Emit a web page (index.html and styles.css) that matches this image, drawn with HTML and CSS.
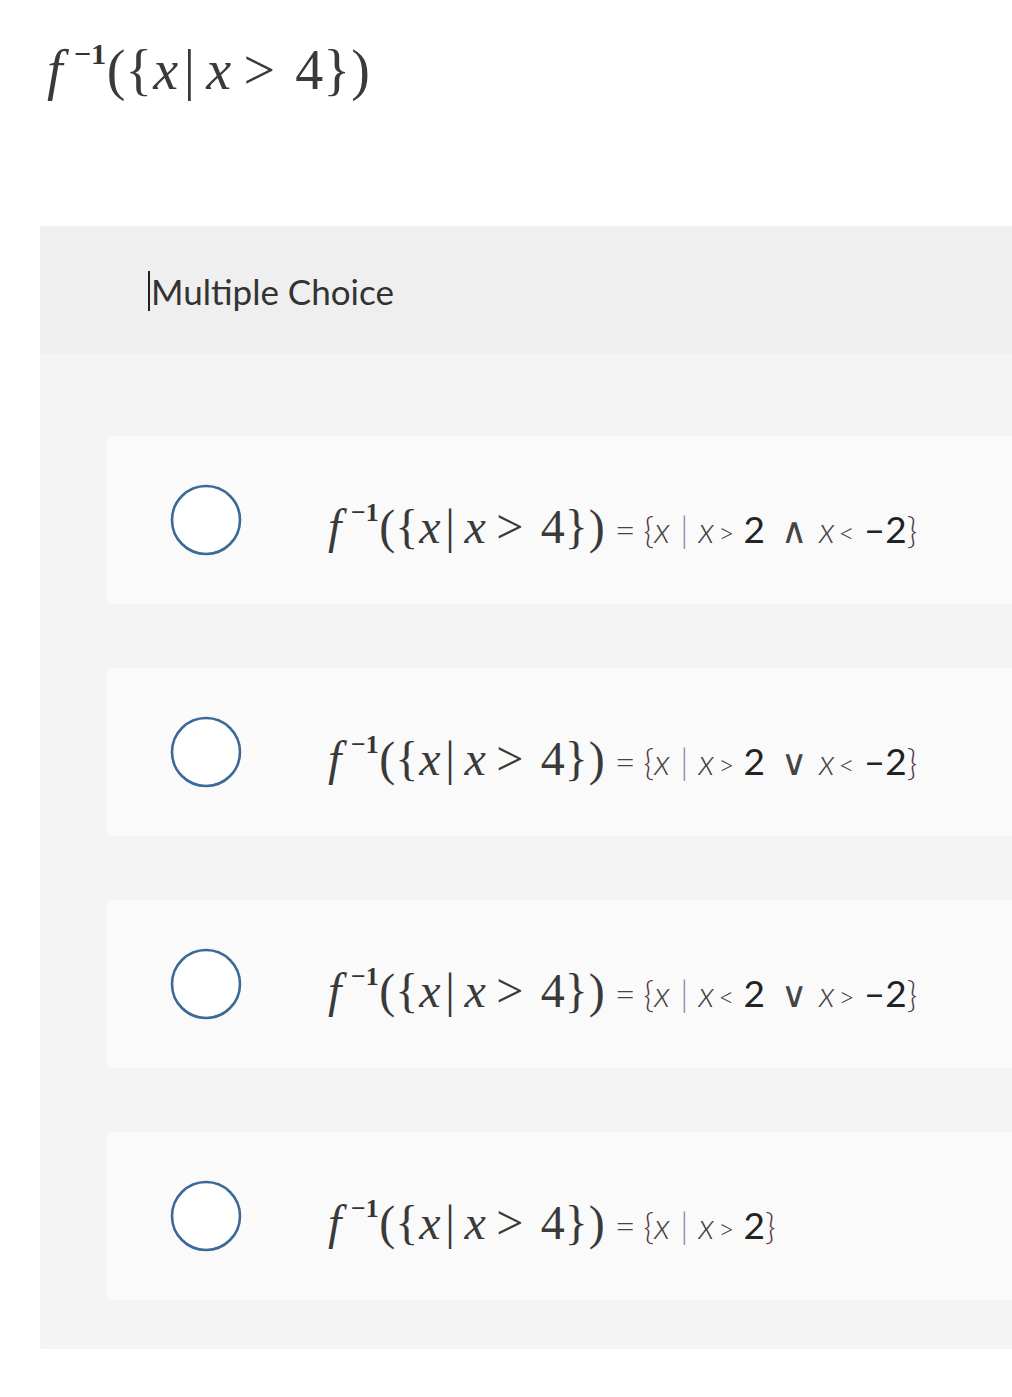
FILE: index.html
```html
<!DOCTYPE html>
<html lang="en">
<head>
<meta charset="utf-8">
<title>Multiple Choice</title>
<link rel="stylesheet" href="styles.css">
</head>
<body>
<div class="question">
  <span class="math title-math"><i class="f">f</i><sup>−1</sup><span class="p">(</span><span class="b">{</span><i>x</i><span class="mid">|</span><i>x</i><span class="rel">&gt;</span><span class="four">4</span><span class="b">}</span><span class="p">)</span></span>
</div>
<section class="panel">
  <header class="panel-head"><span class="cursor"></span>Multiple Choice</header>
  <div class="panel-body">
    <div class="option">
      <svg class="radio" width="72" height="72" viewBox="0 0 72 72"><circle cx="36" cy="36" r="34" fill="#fff" stroke="#3c6a96" stroke-width="2.6"/></svg>
      <div class="answer"><span class="math"><i class="f">f</i><sup>−1</sup><span class="p">(</span><span class="b">{</span><i>x</i><span class="mid">|</span><i>x</i><span class="rel">&gt;</span><span class="four">4</span><span class="b">}</span><span class="p">)</span></span><span class="eq"><span class="eqs">=</span><span class="br">{</span><i>x</i><span class="bar">|</span><i>x</i><span class="op">&gt;</span><span class="num">2</span><span class="logic">∧</span><i>x</i><span class="op">&lt;</span><span class="num">–2</span><span class="br">}</span></span></div>
    </div>
    <div class="option">
      <svg class="radio" width="72" height="72" viewBox="0 0 72 72"><circle cx="36" cy="36" r="34" fill="#fff" stroke="#3c6a96" stroke-width="2.6"/></svg>
      <div class="answer"><span class="math"><i class="f">f</i><sup>−1</sup><span class="p">(</span><span class="b">{</span><i>x</i><span class="mid">|</span><i>x</i><span class="rel">&gt;</span><span class="four">4</span><span class="b">}</span><span class="p">)</span></span><span class="eq"><span class="eqs">=</span><span class="br">{</span><i>x</i><span class="bar">|</span><i>x</i><span class="op">&gt;</span><span class="num">2</span><span class="logic">∨</span><i>x</i><span class="op">&lt;</span><span class="num">–2</span><span class="br">}</span></span></div>
    </div>
    <div class="option">
      <svg class="radio" width="72" height="72" viewBox="0 0 72 72"><circle cx="36" cy="36" r="34" fill="#fff" stroke="#3c6a96" stroke-width="2.6"/></svg>
      <div class="answer"><span class="math"><i class="f">f</i><sup>−1</sup><span class="p">(</span><span class="b">{</span><i>x</i><span class="mid">|</span><i>x</i><span class="rel">&gt;</span><span class="four">4</span><span class="b">}</span><span class="p">)</span></span><span class="eq"><span class="eqs">=</span><span class="br">{</span><i>x</i><span class="bar">|</span><i>x</i><span class="op">&lt;</span><span class="num">2</span><span class="logic">∨</span><i>x</i><span class="op">&gt;</span><span class="num">–2</span><span class="br">}</span></span></div>
    </div>
    <div class="option">
      <svg class="radio" width="72" height="72" viewBox="0 0 72 72"><circle cx="36" cy="36" r="34" fill="#fff" stroke="#3c6a96" stroke-width="2.6"/></svg>
      <div class="answer"><span class="math"><i class="f">f</i><sup>−1</sup><span class="p">(</span><span class="b">{</span><i>x</i><span class="mid">|</span><i>x</i><span class="rel">&gt;</span><span class="four">4</span><span class="b">}</span><span class="p">)</span></span><span class="eq"><span class="eqs">=</span><span class="br">{</span><i>x</i><span class="bar">|</span><i>x</i><span class="op">&gt;</span><span class="num">2</span><span class="br">}</span></span></div>
    </div>
  </div>
</section>
</body>
</html>
```

FILE: styles.css
```css
html, body {
  margin: 0;
  padding: 0;
  background: #fff;
  overflow: hidden;
}
body {
  width: 1012px;
  height: 1397px;
  font-family: "Lato", "Open Sans", sans-serif;
  color: #333;
}
.question {
  padding: 42px 0 0 47px;
  height: 226px;
  box-sizing: border-box;
  line-height: 1;
}
.math {
  font-family: "Liberation Serif", "DejaVu Serif", serif;
  color: #3a3a3a;
  white-space: nowrap;
  display: inline-flex;
  align-items: baseline;
}
.math i {
  font-style: italic;
}
.math .f {
  margin-right: 0.2em;
}
.math sup {
  font-size: 0.54em;
  line-height: 1;
  position: relative;
  top: -0.82em;
  vertical-align: baseline;
  font-weight: bold;
  margin-right: 0.02em;
  color: #333;
}
.math .b {
  margin-right: 0.02em;
}
.math .mid {
  margin: 0 0.2em 0 0.1em;
}
.math .rel {
  margin: 0 0.36em 0 0.22em;
}
.title-math {
  font-size: 56px;
}
.panel {
  margin-left: 40px;
  background: #f4f4f4;
  border-radius: 3px 0 0 3px;
}
.panel-head {
  height: 127px;
  background: #efefef;
  display: flex;
  align-items: center;
  padding: 2px 0 0 108px;
  font-family: "Lato", "Open Sans", sans-serif;
  font-size: 35px;
  color: #333;
  box-sizing: border-box;
  border-radius: 3px 0 0 0;
}
.cursor {
  display: inline-block;
  width: 2px;
  height: 40px;
  background: #222;
  margin-right: 1px;
}
.panel-body {
  padding: 83px 0 49px 67px;
  display: flex;
  flex-direction: column;
  gap: 64px;
}
.option {
  height: 168px;
  background: #fafafa;
  display: flex;
  align-items: center;
  padding: 0 0 0 63px;
  border-radius: 3px 0 0 3px;
}
.radio {
  flex: none;
  display: block;
}
.answer {
  margin-left: 86px;
  display: flex;
  align-items: baseline;
  white-space: nowrap;
  padding-top: 12px;
}
.answer .math {
  font-size: 48px;
}
.eq {
  font-family: "Lato", "Open Sans", sans-serif;
  font-weight: 300;
  font-size: 36px;
  color: #444;
  display: inline-flex;
  align-items: baseline;
  margin-left: 10px;
}
.eq i {
  font-style: italic;
}
.eq .eqs {
  margin-right: 8px;
}
.eq .br {
  color: #5a3b4a;
}
.eq .br:first-of-type {
  margin-right: 3px;
}
.eq .bar {
  color: #8c8ca8;
  margin: 0 10px;
}
.eq .op {
  font-size: 28px;
  margin: 0 9px 0 4px;
}
.eq .num {
  font-weight: 400;
  font-size: 37px;
  color: #222;
}
.eq .logic {
  margin: 0 12px 0 16px;
}
```
